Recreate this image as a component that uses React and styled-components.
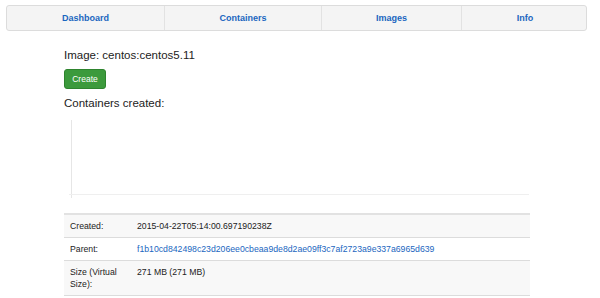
import React from "react";
import styled, { createGlobalStyle } from "styled-components";

const Global = createGlobalStyle`
  html, body { margin: 0; padding: 0; background: #fff; }
  body { font-family: "Liberation Sans", Arial, sans-serif; color: #222; }
`;

const Page = styled.div`
  width: 600px;
  height: 298px;
  overflow: hidden;
  padding: 5px 13px 0 6px;
  box-sizing: border-box;
`;

const Nav = styled.nav`
  display: flex;
  height: 26px;
  background: #f4f4f4;
  border: 1px solid #dcdcdc;
  border-radius: 3px;
  box-sizing: border-box;
`;

const NavItem = styled.a`
  flex: 0 0 ${(p) => p.w}px;
  display: flex;
  align-items: center;
  justify-content: center;
  font-size: 9px;
  font-weight: bold;
  color: #1a66c0;
  text-decoration: none;
  border-left: ${(p) => (p.first ? "none" : "1px solid #e2e2e2")};
  box-sizing: border-box;
`;

const Content = styled.div`
  padding: 17px 0 0 58px;
  width: 466px;
`;

const Heading = styled.div`
  font-size: 11.5px;
  line-height: 14px;
  color: #222;
`;

const Button = styled.button`
  margin-top: 7px;
  width: 42px;
  height: 20px;
  background: #3c9a3c;
  border: 1px solid #2e842e;
  border-radius: 3px;
  color: #fff;
  font-family: "Liberation Sans", Arial, sans-serif;
  font-size: 8.5px;
  padding: 0;
  display: block;
`;

const SubHeading = styled(Heading)`
  margin-top: 7px;
`;

const Chart = styled.div`
  margin-top: 10px;
  margin-left: 7px;
  height: 78px;
  width: 457px;
  position: relative;
  border-left: 1px solid #e6e6e6;
`;

const Axis = styled.div`
  position: absolute;
  left: -3px;
  right: 0;
  bottom: 3px;
  height: 1px;
  background: #efefef;
`;

const Table = styled.table`
  margin-top: 15px;
  width: 466px;
  border-collapse: collapse;
  font-size: 8.7px;
  border-top: 2px solid #e2e2e2;
`;

const Row = styled.tr`
  background: ${(p) => (p.alt ? "#f8f8f8" : "#fff")};
  border-bottom: 1px solid #dcdcdc;
`;

const Label = styled.td`
  width: 67px;
  padding: 5px 0 5px 6px;
  vertical-align: top;
  line-height: 12px;
  color: #222;
`;

const Value = styled.td`
  padding: 5px 0;
  vertical-align: top;
  line-height: 12px;
  color: #222;
`;

const Link = styled.a`
  color: #1a66c0;
  text-decoration: none;
`;

export default function App() {
  return (
    <>
      <Global />
      <Page>
        <Nav>
          <NavItem first w={157}>Dashboard</NavItem>
          <NavItem w={157}>Containers</NavItem>
          <NavItem w={140}>Images</NavItem>
          <NavItem w={127}>Info</NavItem>
        </Nav>
        <Content>
          <Heading>Image: centos:centos5.11</Heading>
          <Button>Create</Button>
          <SubHeading>Containers created:</SubHeading>
          <Chart>
            <Axis />
          </Chart>
          <Table>
            <tbody>
              <Row alt>
                <Label>Created:</Label>
                <Value>2015-04-22T05:14:00.697190238Z</Value>
              </Row>
              <Row>
                <Label>Parent:</Label>
                <Value>
                  <Link>f1b10cd842498c23d206ee0cbeaa9de8d2ae09ff3c7af2723a9e337a6965d639</Link>
                </Value>
              </Row>
              <Row alt>
                <Label>Size (Virtual Size):</Label>
                <Value>271 MB (271 MB)</Value>
              </Row>
            </tbody>
          </Table>
        </Content>
      </Page>
    </>
  );
}
